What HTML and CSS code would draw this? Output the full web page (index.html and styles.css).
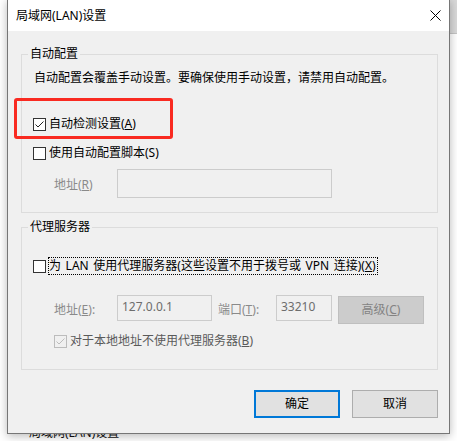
FILE: index.html
```html
<!DOCTYPE html>
<html lang="zh-CN">
<head>
<meta charset="utf-8">
<title>局域网(LAN)设置</title>
<link rel="stylesheet" href="styles.css">
</head>
<body>
<div class="desktop">
  <div class="behind-right"></div>
  <div class="behind-title">局域网(LAN)设置</div>
  <div class="dialog">
    <div class="titlebar">
      <span class="title">局域网(LAN)设置</span>
      <svg class="close" width="11" height="11" viewBox="0 0 11 11"><path d="M0.5 0.5 L10.5 10.5 M10.5 0.5 L0.5 10.5" stroke="#000" stroke-width="1" fill="none"/></svg>
    </div>
    <div class="body">
      <fieldset class="group group-auto">
        <legend>自动配置</legend>
        <p class="desc">自动配置会覆盖手动设置。要确保使用手动设置，请禁用自动配置。</p>
        <label class="check row-detect"><span class="box"><svg width="11" height="11" viewBox="0 0 11 11"><path d="M1.5 5.5 L4 8 L9.5 2.5" stroke="#222" stroke-width="1" fill="none"/></svg></span><span>自动检测设置(<u>A</u>)</span></label>
        <label class="check row-script"><span class="box"></span><span>使用自动配置脚本(S)</span></label>
        <div class="field-row row-url">
          <span class="field-label label-url">地址(<u>R</u>)</span>
          <span class="input input-url"></span>
        </div>
      </fieldset>
      <fieldset class="group group-proxy">
        <legend>代理服务器</legend>
        <label class="check row-proxy"><span class="box"></span><span class="focus">为 LAN 使用代理服务器(这些设置不用于拨号或 VPN 连接)(<u>X</u>)</span></label>
        <div class="field-row row-addr">
          <span class="field-label label-addr">地址(<u>E</u>):</span>
          <span class="input input-addr">127.0.0.1</span>
          <span class="field-label label-port">端口(<u>T</u>):</span>
          <span class="input input-port">33210</span>
          <span class="btn btn-disabled">高级(<u>C</u>)</span>
        </div>
        <label class="check check-disabled row-local"><span class="box"><svg width="11" height="11" viewBox="0 0 11 11"><path d="M1.5 5.5 L4 8 L9.5 2.5" stroke="#bcbcbc" stroke-width="1" fill="none"/></svg></span><span>对于本地地址不使用代理服务器(<u>B</u>)</span></label>
      </fieldset>
      <div class="actions">
        <span class="btn btn-default">确定</span>
        <span class="btn">取消</span>
      </div>
    </div>
  </div>
  <div class="annotation"></div>
</div>
</body>
</html>
```

FILE: styles.css
```css
html, body {
  margin: 0;
  padding: 0;
  background: #ffffff;
}

body {
  font-family: "Noto Sans", "Noto Sans CJK SC", sans-serif;
  font-size: 12px;
  line-height: 16px;
  color: #000;
}

.desktop {
  position: relative;
  width: 457px;
  height: 441px;
  overflow: hidden;
  background: #ffffff;
}

.behind-right {
  position: absolute;
  left: 440px;
  top: 0;
  width: 20px;
  height: 33px;
  background: #d9d9d9;
  border-bottom: 1px solid #c4c4c4;
}

.behind-title {
  position: absolute;
  left: 29px;
  top: 425px;
  white-space: nowrap;
  color: #111;
}

.dialog {
  position: absolute;
  left: 7px;
  top: -1px;
  width: 443px;
  height: 435px;
  box-sizing: border-box;
  border: 1px solid #767676;
  background: #f0f0f0;
  box-shadow: 0 2px 9px rgba(0, 0, 0, 0.28);
  display: flex;
  flex-direction: column;
}

.titlebar {
  height: 31px;
  flex: none;
  background: #ffffff;
  display: flex;
  align-items: center;
  padding-left: 8px;
}

.title {
  white-space: nowrap;
}

.close {
  margin-left: auto;
  margin-right: 8px;
  display: block;
}

.body {
  padding: 15px 11px 0 13px;
}

.group {
  margin: 0;
  padding: 0;
  border: 1px solid #dcdcdc;
  min-width: 0;
}

.group legend {
  margin-left: 6px;
  padding: 0 2px;
  line-height: 16px;
}

.group-auto {
  padding-bottom: 14px;
}

.group-proxy {
  margin-top: 6px;
  padding-bottom: 20px;
}

.desc {
  margin: 8px 0 0 12px;
  white-space: nowrap;
}

.check {
  display: flex;
  align-items: center;
  height: 16px;
  margin-left: 11px;
  white-space: nowrap;
}

.box {
  width: 13px;
  height: 13px;
  box-sizing: border-box;
  border: 1px solid #333;
  background: #fff;
  margin-right: 3px;
  flex: none;
  display: flex;
}

.box svg {
  display: block;
}

.check-disabled .box {
  border-color: #bcbcbc;
  background: #f0f0f0;
}

.check-disabled {
  color: #5a5a5a;
}

.row-detect {
  margin-top: 30px;
}

.row-script {
  margin-top: 13px;
}

.row-proxy {
  margin-top: 23px;
}

.focus {
  outline: 1px dotted #000;
  outline-offset: 0;
  padding: 0 1px 0 0;
  word-spacing: 1.5px;
}

.row-local {
  margin-top: 9px;
  margin-left: 32px;
}

.field-row {
  display: flex;
  align-items: flex-start;
  margin-left: 32px;
}

.row-url {
  margin-top: 8px;
}

.row-addr {
  margin-top: 21px;
}

.field-label {
  color: #8a8a8a;
  white-space: nowrap;
  flex: none;
}

.label-url {
  width: 63px;
  margin-top: 8px;
}

.label-addr {
  width: 63px;
  margin-top: 7px;
}

.label-port {
  width: 58px;
  margin-left: 6px;
  margin-top: 7px;
}

.input {
  box-sizing: border-box;
  border: 1px solid #cccccc;
  background: #f0f0f0;
  color: #6d6d6d;
  padding: 3px 0 0 4px;
  flex: none;
}

.input-url {
  width: 215px;
  height: 29px;
}

.input-addr {
  width: 95px;
  height: 26px;
}

.input-port {
  width: 56px;
  height: 26px;
}

.btn {
  box-sizing: border-box;
  width: 86px;
  height: 28px;
  border: 1px solid #adadad;
  background: #e1e1e1;
  display: flex;
  align-items: center;
  justify-content: center;
  white-space: nowrap;
  flex: none;
}

.btn-disabled {
  margin-left: 6px;
  margin-top: 1px;
  background: #cccccc;
  border-color: #bfbfbf;
  color: #838383;
}

.btn-default {
  border: 2px solid #0078d7;
}

.actions {
  display: flex;
  justify-content: flex-end;
  gap: 12px;
  margin-top: 20px;
}

u {
  text-underline-offset: 1px;
}

.annotation {
  position: absolute;
  left: 14px;
  top: 98px;
  width: 159px;
  height: 41px;
  box-sizing: border-box;
  border: 3px solid #f92a21;
  border-radius: 3px;
}
```
